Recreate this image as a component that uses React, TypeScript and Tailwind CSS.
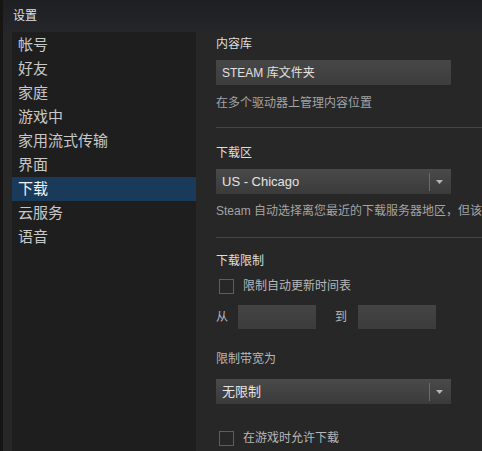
import React from "react";

const font = { fontFamily: '"Liberation Sans", Arial, "Noto Sans CJK SC", sans-serif' };

function Arrow() {
  return (
    <div className="flex items-center h-full">
      <div className="w-px h-[18px] bg-[#6a6a6a]" />
      <svg width="21" height="8" viewBox="0 0 21 8" className="ml-[0px]">
        <polygon points="6,2 13,2 9.5,6" fill="#b4b4b4" />
      </svg>
    </div>
  );
}

function Dropdown({ label, className = "" }: { label: string; className?: string }) {
  return (
    <div
      className={`w-[235px] h-[25px] flex items-center justify-between pl-[6px] bg-gradient-to-b from-[#4a4a4a] to-[#3a3a3a] ${className}`}
    >
      <span className="text-[13px] leading-[16px] text-[#e4e4e4]">{label}</span>
      <Arrow />
    </div>
  );
}

function Checkbox({ label, className = "" }: { label: string; className?: string }) {
  return (
    <div className={`flex items-center h-[16px] ${className}`}>
      <div className="ml-[3px] w-[15px] h-[15px] border border-[#5e5e5e]" />
      <span className="ml-[9px] text-[12px] leading-[16px] text-[#b8b8b8]">{label}</span>
    </div>
  );
}

export default function App() {
  const items = ["帐号", "好友", "家庭", "游戏中", "家用流式传输", "界面", "下载", "云服务", "语音"];
  return (
    <div style={font} className="w-[482px] h-[451px] overflow-hidden flex bg-[#141414]">
      <div className="w-[3px] shrink-0 bg-[#161514]" />
      <div className="flex-1 flex flex-col bg-[#272727] min-w-0">
        <div className="h-[32px] shrink-0 flex items-center pl-[10px] bg-gradient-to-b from-[#1d1f22] to-[#25262a]">
          <span className="text-[12px] leading-[16px] text-[#e2e2e2]">设置</span>
        </div>
        <div className="flex-1 flex min-h-0">
          <div className="w-[9px] shrink-0" />
          <div className="w-[184px] shrink-0 bg-[#1e1e1e] pt-[1px]">
            {items.map((t) => (
              <div
                key={t}
                className={`h-[24px] flex items-center pl-[6px] text-[15px] ${
                  t === "下载" ? "bg-[#1a3a5a] text-[#f2f2f2]" : "text-[#c8c8c8]"
                }`}
              >
                {t}
              </div>
            ))}
          </div>
          <div className="flex-1 min-w-0 overflow-hidden pl-[20px] pt-[4px] flex flex-col">
            <div className="text-[12px] leading-[16px] text-[#dedede]">内容库</div>
            <div className="mt-[8px] w-[235px] h-[25px] shrink-0 flex items-center pl-[6px] bg-gradient-to-b from-[#474747] to-[#3d3d3d]">
              <span className="text-[12px] leading-[16px] text-[#e0e0e0]">STEAM 库文件夹</span>
            </div>
            <div className="mt-[10px] text-[12px] leading-[16px] text-[#a2a4a6]">在多个驱动器上管理内容位置</div>
            <div className="mt-[16px] h-px shrink-0 bg-[#464646]" />
            <div className="mt-[17px] text-[12px] leading-[16px] text-[#dedede]">下载区</div>
            <Dropdown label="US - Chicago" className="mt-[8px] shrink-0" />
            <div className="mt-[9px] text-[12px] leading-[16px] text-[#a2a4a6] whitespace-nowrap">
              Steam 自动选择离您最近的下载服务器地区，但该设置可被更改
            </div>
            <div className="mt-[18px] h-px shrink-0 bg-[#464646]" />
            <div className="mt-[15px] text-[12px] leading-[16px] text-[#dedede]">下载限制</div>
            <Checkbox label="限制自动更新时间表" className="mt-[9px]" />
            <div className="mt-[11px] flex items-center h-[24px] shrink-0">
              <span className="w-[22px] text-[12px] leading-[16px] text-[#b8b8b8]">从</span>
              <div className="w-[78px] h-[24px] bg-gradient-to-b from-[#444444] to-[#3c3c3c]" />
              <span className="ml-[19px] w-[23px] text-[12px] leading-[16px] text-[#b8b8b8]">到</span>
              <div className="w-[78px] h-[24px] bg-gradient-to-b from-[#444444] to-[#3c3c3c]" />
            </div>
            <div className="mt-[22px] text-[12px] leading-[16px] text-[#b8b8b8]">限制带宽为</div>
            <Dropdown label="无限制" className="mt-[12px] shrink-0" />
            <Checkbox label="在游戏时允许下载" className="mt-[26px]" />
          </div>
        </div>
      </div>
    </div>
  );
}
